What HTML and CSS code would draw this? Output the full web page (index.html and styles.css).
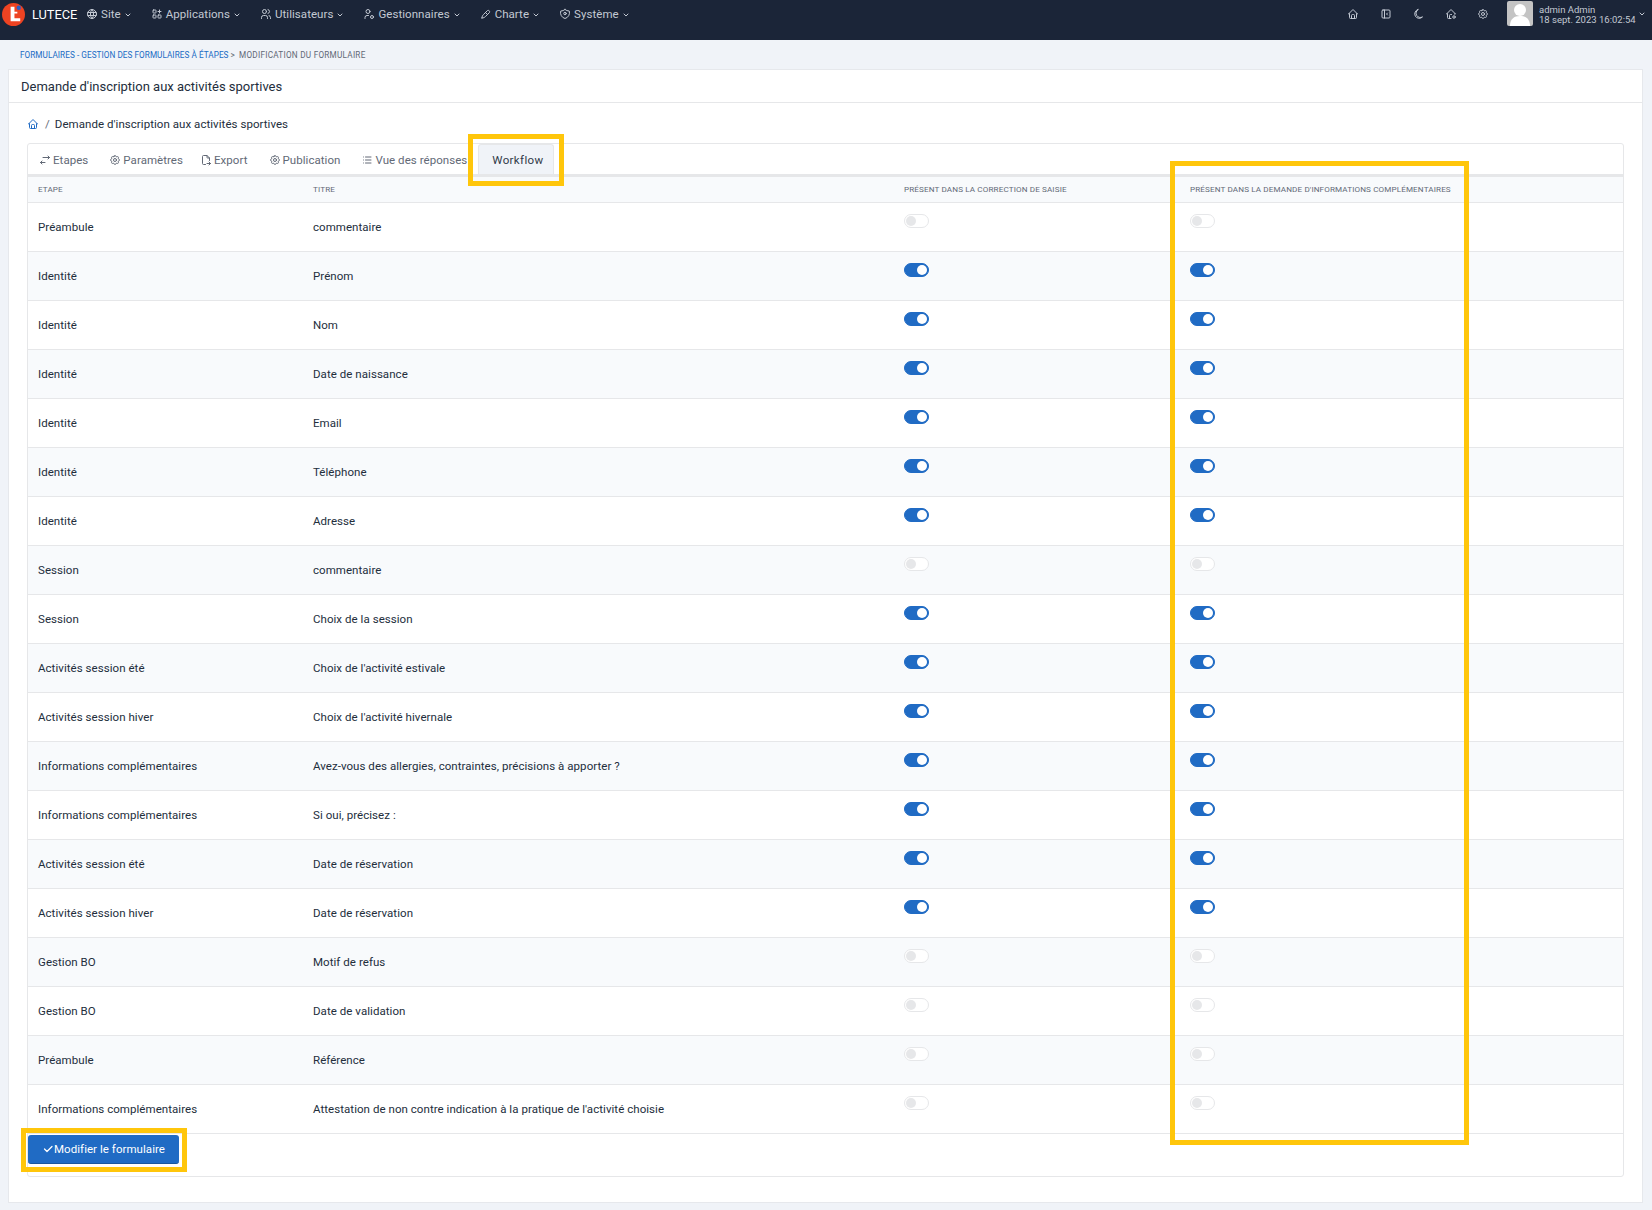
FILE: index.html
```html
<!DOCTYPE html>
<html lang="fr">
  <head>
    <meta charset="UTF-8" />
    <title>Demande d'inscription aux activités sportives</title>
    <link rel="stylesheet" href="styles.css">
  </head>
  <body>
    <svg class="sprites" width="0" height="0">
      <symbol id="i-home" viewBox="0 0 24 24"><path d="M5 12H3l9-9 9 9h-2M5 12v7a2 2 0 0 0 2 2h10a2 2 0 0 0 2-2v-7M9 21v-6a2 2 0 0 1 2-2h2a2 2 0 0 1 2 2v6"/></symbol>
      <symbol id="i-world" viewBox="0 0 24 24"><circle cx="12" cy="12" r="9"/><path d="M3.6 9h16.8M3.6 15h16.8M11.5 3a17 17 0 0 0 0 18M12.5 3a17 17 0 0 1 0 18"/></symbol>
      <symbol id="i-apps" viewBox="0 0 24 24"><rect x="4" y="4" width="6" height="6" rx="1"/><rect x="4" y="14" width="6" height="6" rx="1"/><rect x="14" y="14" width="6" height="6" rx="1"/><path d="M14 7h6M17 4v6"/></symbol>
      <symbol id="i-users" viewBox="0 0 24 24"><circle cx="9" cy="7" r="4"/><path d="M3 21v-2a4 4 0 0 1 4-4h4a4 4 0 0 1 4 4v2M16 3.1a4 4 0 0 1 0 7.8M21 21v-2a4 4 0 0 0-3-3.9"/></symbol>
      <symbol id="i-manager" viewBox="0 0 24 24"><circle cx="10" cy="7" r="4"/><path d="M4 21v-2a4 4 0 0 1 4-4h3"/><circle cx="18" cy="18" r="3"/></symbol>
      <symbol id="i-brush" viewBox="0 0 24 24"><path d="M4 20c0-3 1-5 3-7l8-8a3 3 0 0 1 4 4l-8 8c-2 2-4 3-7 3zM11 9l4 4"/></symbol>
      <symbol id="i-shield" viewBox="0 0 24 24"><path d="M12 3a12 12 0 0 0 8.5 3A12 12 0 0 1 12 21 12 12 0 0 1 3.500 6 12 12 0 0 0 12 3"/><circle cx="12" cy="11" r="2.500"/></symbol>
      <symbol id="i-chevron" viewBox="0 0 24 24"><path d="M6 9l6 6 6-6"/></symbol>
      <symbol id="i-book" viewBox="0 0 24 24"><rect x="4" y="4" width="16" height="16" rx="2"/><path d="M9 4v16M15 10l-2 2 2 2"/></symbol>
      <symbol id="i-moon" viewBox="0 0 24 24"><path d="M12 3h.4A7.500 7.500 0 0 0 21 17.800 9 9 0 1 1 12 3"/></symbol>
      <symbol id="i-home-cog" viewBox="0 0 24 24"><path d="M5 12H3l9-9 9 9h-2M5 12v7a2 2 0 0 0 2 2h5M9 21v-6a2 2 0 0 1 2-2h2"/><circle cx="18" cy="18" r="2.500"/></symbol>
      <symbol id="i-gear" viewBox="0 0 24 24"><path d="M10.300 4.300c.4-1.800 3-1.800 3.400 0a1.700 1.700 0 0 0 2.600 1.100c1.500-.9 3.300.8 2.400 2.400a1.700 1.700 0 0 0 1 2.500c1.800.4 1.800 3 0 3.400a1.700 1.700 0 0 0-1 2.600c.9 1.500-.9 3.300-2.400 2.400a1.700 1.700 0 0 0-2.600 1c-.4 1.800-3 1.800-3.400 0a1.700 1.700 0 0 0-2.600-1c-1.500.9-3.300-.9-2.400-2.400a1.700 1.700 0 0 0-1-2.600c-1.800-.4-1.800-3 0-3.400a1.700 1.700 0 0 0 1-2.500c-.9-1.600.9-3.300 2.400-2.400a1.700 1.700 0 0 0 2.600-1.100z"/><circle cx="12" cy="12" r="3"/></symbol>
      <symbol id="i-transfer" viewBox="0 0 24 24"><path d="M21 7H8M18 4l3 3-3 3M3 17h9M6 14l-3 3 3 3"/></symbol>
      <symbol id="i-export" viewBox="0 0 24 24"><path d="M14 3v4a1 1 0 0 0 1 1h4M11 21H7a2 2 0 0 1-2-2V5a2 2 0 0 1 2-2h7l5 5v5M14 19h7M18 16l3 3-3 3"/></symbol>
      <symbol id="i-list" viewBox="0 0 24 24"><path d="M9 6h11M9 12h11M9 18h11M5 6v.01M5 12v.01M5 18v.01"/></symbol>
      <symbol id="i-check" viewBox="0 0 24 24"><path d="M5 12l5 5L20 7"/></symbol>
    </svg>

    <header class="navbar">
      <div class="brand">
        <svg class="logo" viewBox="0 0 24 24">
          <circle cx="12" cy="12" r="12" fill="#ee4322"/>
          <path d="M9 4h4v12h6v3H9zM13 9h3v2h-3z" fill="#fff"/>
          <circle cx="17.500" cy="5" r="2.300" fill="#2c5fc4"/>
        </svg>
        <span class="brand-name">LUTECE</span>
      </div>
      <nav class="menu">
        <a class="menu-item"><svg class="icon"><use href="#i-world"/></svg>Site<svg class="caret"><use href="#i-chevron"/></svg></a>
        <a class="menu-item"><svg class="icon"><use href="#i-apps"/></svg>Applications<svg class="caret"><use href="#i-chevron"/></svg></a>
        <a class="menu-item"><svg class="icon"><use href="#i-users"/></svg>Utilisateurs<svg class="caret"><use href="#i-chevron"/></svg></a>
        <a class="menu-item"><svg class="icon"><use href="#i-manager"/></svg>Gestionnaires<svg class="caret"><use href="#i-chevron"/></svg></a>
        <a class="menu-item"><svg class="icon"><use href="#i-brush"/></svg>Charte<svg class="caret"><use href="#i-chevron"/></svg></a>
        <a class="menu-item"><svg class="icon"><use href="#i-shield"/></svg>Système<svg class="caret"><use href="#i-chevron"/></svg></a>
      </nav>
      <div class="tools">
        <svg class="tool"><use href="#i-home"/></svg>
        <svg class="tool"><use href="#i-book"/></svg>
        <svg class="tool"><use href="#i-moon"/></svg>
        <svg class="tool"><use href="#i-home-cog"/></svg>
        <svg class="tool"><use href="#i-gear"/></svg>
      </div>
      <div class="user">
        <div class="avatar">
          <svg viewBox="0 0 26 25"><circle cx="13" cy="9" r="6" fill="#fff"/><path d="M3 25c0-7 4-10 10-10s10 3 10 10z" fill="#fff"/></svg>
        </div>
        <div class="user-text">admin Admin<br>18 sept. 2023 16:02:54</div>
        <svg class="user-caret"><use href="#i-chevron"/></svg>
      </div>
    </header>

    <div class="page-crumbs"><a>Formulaires - Gestion des formulaires à étapes</a> &gt; <span class="crumb-current">Modification du formulaire</span></div>

    <main class="card">
      <div class="card-header">Demande d'inscription aux activités sportives</div>
      <div class="card-body">
        <div class="trail">
          <svg class="trail-home"><use href="#i-home"/></svg>
          <span class="trail-sep">/</span>
          <span>Demande d'inscription aux activités sportives</span>
        </div>
        <div class="panel">
          <ul class="tabs">
            <li class="tab"><svg class="tab-icon"><use href="#i-transfer"/></svg>Etapes</li>
            <li class="tab"><svg class="tab-icon"><use href="#i-gear"/></svg>Paramètres</li>
            <li class="tab"><svg class="tab-icon"><use href="#i-export"/></svg>Export</li>
            <li class="tab"><svg class="tab-icon"><use href="#i-gear"/></svg>Publication</li>
            <li class="tab"><svg class="tab-icon"><use href="#i-list"/></svg>Vue des réponses</li>
            <li class="tab active">Workflow</li>
          </ul>
          <table class="steps">
            <thead>
              <tr>
                <th class="col-step">Etape</th>
                <th class="col-title">Titre</th>
                <th class="col-flag">Présent dans la correction de saisie</th>
                <th>Présent dans la demande d'informations complémentaires</th>
              </tr>
            </thead>
            <tbody>
              <tr><td>Préambule</td><td>commentaire</td><td class="flag"><span class="toggle"></span></td><td class="flag"><span class="toggle"></span></td></tr>
              <tr><td>Identité</td><td>Prénom</td><td class="flag"><span class="toggle on"></span></td><td class="flag"><span class="toggle on"></span></td></tr>
              <tr><td>Identité</td><td>Nom</td><td class="flag"><span class="toggle on"></span></td><td class="flag"><span class="toggle on"></span></td></tr>
              <tr><td>Identité</td><td>Date de naissance</td><td class="flag"><span class="toggle on"></span></td><td class="flag"><span class="toggle on"></span></td></tr>
              <tr><td>Identité</td><td>Email</td><td class="flag"><span class="toggle on"></span></td><td class="flag"><span class="toggle on"></span></td></tr>
              <tr><td>Identité</td><td>Téléphone</td><td class="flag"><span class="toggle on"></span></td><td class="flag"><span class="toggle on"></span></td></tr>
              <tr><td>Identité</td><td>Adresse</td><td class="flag"><span class="toggle on"></span></td><td class="flag"><span class="toggle on"></span></td></tr>
              <tr><td>Session</td><td>commentaire</td><td class="flag"><span class="toggle"></span></td><td class="flag"><span class="toggle"></span></td></tr>
              <tr><td>Session</td><td>Choix de la session</td><td class="flag"><span class="toggle on"></span></td><td class="flag"><span class="toggle on"></span></td></tr>
              <tr><td>Activités session été</td><td>Choix de l'activité estivale</td><td class="flag"><span class="toggle on"></span></td><td class="flag"><span class="toggle on"></span></td></tr>
              <tr><td>Activités session hiver</td><td>Choix de l'activité hivernale</td><td class="flag"><span class="toggle on"></span></td><td class="flag"><span class="toggle on"></span></td></tr>
              <tr><td>Informations complémentaires</td><td>Avez-vous des allergies, contraintes, précisions à apporter ?</td><td class="flag"><span class="toggle on"></span></td><td class="flag"><span class="toggle on"></span></td></tr>
              <tr><td>Informations complémentaires</td><td>Si oui, précisez :</td><td class="flag"><span class="toggle on"></span></td><td class="flag"><span class="toggle on"></span></td></tr>
              <tr><td>Activités session été</td><td>Date de réservation</td><td class="flag"><span class="toggle on"></span></td><td class="flag"><span class="toggle on"></span></td></tr>
              <tr><td>Activités session hiver</td><td>Date de réservation</td><td class="flag"><span class="toggle on"></span></td><td class="flag"><span class="toggle on"></span></td></tr>
              <tr><td>Gestion BO</td><td>Motif de refus</td><td class="flag"><span class="toggle"></span></td><td class="flag"><span class="toggle"></span></td></tr>
              <tr><td>Gestion BO</td><td>Date de validation</td><td class="flag"><span class="toggle"></span></td><td class="flag"><span class="toggle"></span></td></tr>
              <tr><td>Préambule</td><td>Référence</td><td class="flag"><span class="toggle"></span></td><td class="flag"><span class="toggle"></span></td></tr>
              <tr><td>Informations complémentaires</td><td>Attestation de non contre indication à la pratique de l'activité choisie</td><td class="flag"><span class="toggle"></span></td><td class="flag"><span class="toggle"></span></td></tr>
            </tbody>
          </table>
          <button class="btn"><svg class="btn-icon"><use href="#i-check"/></svg>Modifier le formulaire</button>
        </div>
      </div>
    </main>

    <!-- yellow highlight frames drawn over the screenshot -->
    <div class="mark mark-tab"></div>
    <div class="mark mark-col"></div>
    <div class="mark mark-btn"></div>
  </body>
</html>
```

FILE: styles.css
```css
* {
  box-sizing: border-box;
}
body {
  margin: 0;
  height: 1210px;
  overflow: hidden;
  background-color: #f0f3f8;
  color: #232e3c;
  font-family: Roboto, "Noto Sans", sans-serif;
  font-size: 11.500px;
  letter-spacing: 0.05px;
}
.sprites {
  position: absolute;
}
svg {
  fill: none;
  stroke: currentColor;
  stroke-width: 2;
  stroke-linecap: round;
  stroke-linejoin: round;
}

/* top bar */
.navbar {
  display: flex;
  height: 40px;
  background-color: #1b2538;
  color: #c3c9d3;
}
.brand {
  display: flex;
  align-items: center;
  height: 28px;
  width: 86px;
  padding-left: 2px;
}
.logo {
  width: 23px;
  height: 23px;
  stroke: none;
}
.brand-name {
  margin-left: 7px;
  color: #fff;
  font-size: 12.800px;
  letter-spacing: 0;
}
.menu {
  display: flex;
  height: 28px;
  align-items: center;
}
.menu-item {
  display: flex;
  align-items: center;
  margin-right: 19px;
}
.icon {
  width: 12px;
  height: 12px;
  margin-right: 3px;
}
.caret {
  width: 8px;
  height: 8px;
  margin-left: 3px;
  margin-top: 1px;
  stroke-width: 3;
}
.tools {
  display: flex;
  align-items: center;
  height: 28px;
  margin-left: auto;
  gap: 20.500px;
}
.tool {
  width: 12px;
  height: 12px;
}
.user {
  display: flex;
  flex-shrink: 0;
  margin-left: 18px;
  width: 145px;
  height: 27px;
}
.avatar {
  flex-shrink: 0;
  width: 26px;
  height: 25px;
  margin-top: 1px;
  border-radius: 2px;
  overflow: hidden;
  background-color: #c4c4c4;
}
.avatar svg {
  display: block;
  width: 26px;
  height: 25px;
  stroke: none;
}
.user-text {
  flex-shrink: 0;
  width: 99px;
  margin-left: 6px;
  margin-top: 5px;
  font-size: 9.500px;
  letter-spacing: 0;
  line-height: 9.500px;
  white-space: nowrap;
}
.user-caret {
  flex-shrink: 0;
  width: 8px;
  height: 8px;
  margin-top: 10px;
  stroke-width: 3;
}

/* breadcrumb above the card */
.page-crumbs {
  height: 29px;
  padding-left: 20px;
  line-height: 31px;
  font-size: 8.200px;
  letter-spacing: 0.05px;
  text-transform: uppercase;
  color: #626976;
}
.page-crumbs a {
  color: #206bc4;
}
.crumb-current {
  margin-left: 2px;
  letter-spacing: 0.25px;
}

/* card */
.card {
  margin: 0 9px 0 8px;
  height: 1134px;
  background-color: #fff;
  border: 1px solid #e6e8ec;
}
.card-header {
  height: 33px;
  padding-left: 12px;
  line-height: 33px;
  font-size: 13px;
  letter-spacing: 0;
  border-bottom: 1px solid #e6e7e9;
}
.card-body {
  padding: 0 18px;
}
.trail {
  display: flex;
  align-items: center;
  height: 40px;
  padding-top: 2px;
}
.trail-home {
  width: 12px;
  height: 12px;
  color: #206bc4;
}
.trail-sep {
  margin: 0 5px 0 6px;
  color: #656d77;
}
.panel {
  height: 1034px;
  border: 1px solid #e6e7e9;
  border-radius: 3px;
}

/* tabs */
.tabs {
  display: flex;
  margin: 0;
  padding: 0 0 0 11px;
  height: 33px;
  list-style: none;
  border-bottom: 3px solid #e6e7e9;
  color: #626976;
}
.tab {
  display: flex;
  align-items: center;
  margin-right: 21px;
  padding-top: 2px;
  white-space: nowrap;
}
.tab:nth-child(2) {
  margin-right: 17px;
}
.tab-icon {
  width: 12px;
  height: 12px;
  margin-right: 2px;
}
.tab.active {
  margin-left: -10px;
  padding: 1px 10px 0 13px;
  background-color: #f0f3f8;
  border: 1px solid #e6e7e9;
  border-bottom: none;
  border-radius: 3px 3px 0 0;
  color: #303a48;
  letter-spacing: 0.35px;
}

/* table */
.steps {
  width: 100%;
  border-collapse: collapse;
  table-layout: fixed;
}
.steps th {
  height: 25px;
  padding: 0 10px;
  text-align: left;
  font-size: 8.100px;
  font-weight: 400;
  letter-spacing: 0.13px;
  text-transform: uppercase;
  color: #626976;
  background-color: #f8fafc;
  border-bottom: 1px solid #e6e7e9;
}
.col-step {
  width: 275px;
}
.col-title {
  width: 591px;
}
.col-flag {
  width: 286px;
}
.steps td {
  height: 49px;
  padding: 1px 10px 0;
  border-bottom: 1px solid #e6e7e9;
}
.steps tbody tr:nth-child(even) td {
  background-color: #f8fafc;
}
.steps td.flag {
  vertical-align: top;
  padding-top: 11px;
}
.toggle {
  display: block;
  position: relative;
  width: 25px;
  height: 14px;
  background-color: #fff;
  border: 1px solid #e6e7e9;
  border-radius: 7px;
}
.toggle::after {
  content: "";
  position: absolute;
  left: 1px;
  top: 1px;
  width: 10px;
  height: 10px;
  border-radius: 50%;
  background-color: #e6e7e9;
}
.toggle.on {
  background-color: #206bc4;
  border-color: #206bc4;
}
.toggle.on::after {
  left: 12px;
  background-color: #fff;
}

/* submit */
.btn {
  display: flex;
  align-items: center;
  justify-content: center;
  width: 151px;
  height: 29px;
  margin-top: 1px;
  padding: 0;
  background-color: #206bc4;
  color: #fff;
  border: 1px solid #1a569d;
  border-width: 0 0 1px;
  border-radius: 3px;
  font-family: inherit;
  font-size: 11.500px;
  letter-spacing: 0.05px;
}
.btn-icon {
  width: 12px;
  height: 12px;
  stroke-width: 2.500;
}

/* highlight frames */
.mark {
  position: absolute;
  border: 5px solid #ffc60b;
}
.mark-tab {
  left: 468px;
  top: 134px;
  width: 96px;
  height: 52px;
}
.mark-col {
  left: 1170px;
  top: 161px;
  width: 299px;
  height: 984px;
}
.mark-btn {
  left: 21px;
  top: 1128px;
  width: 166px;
  height: 44px;
}
```
